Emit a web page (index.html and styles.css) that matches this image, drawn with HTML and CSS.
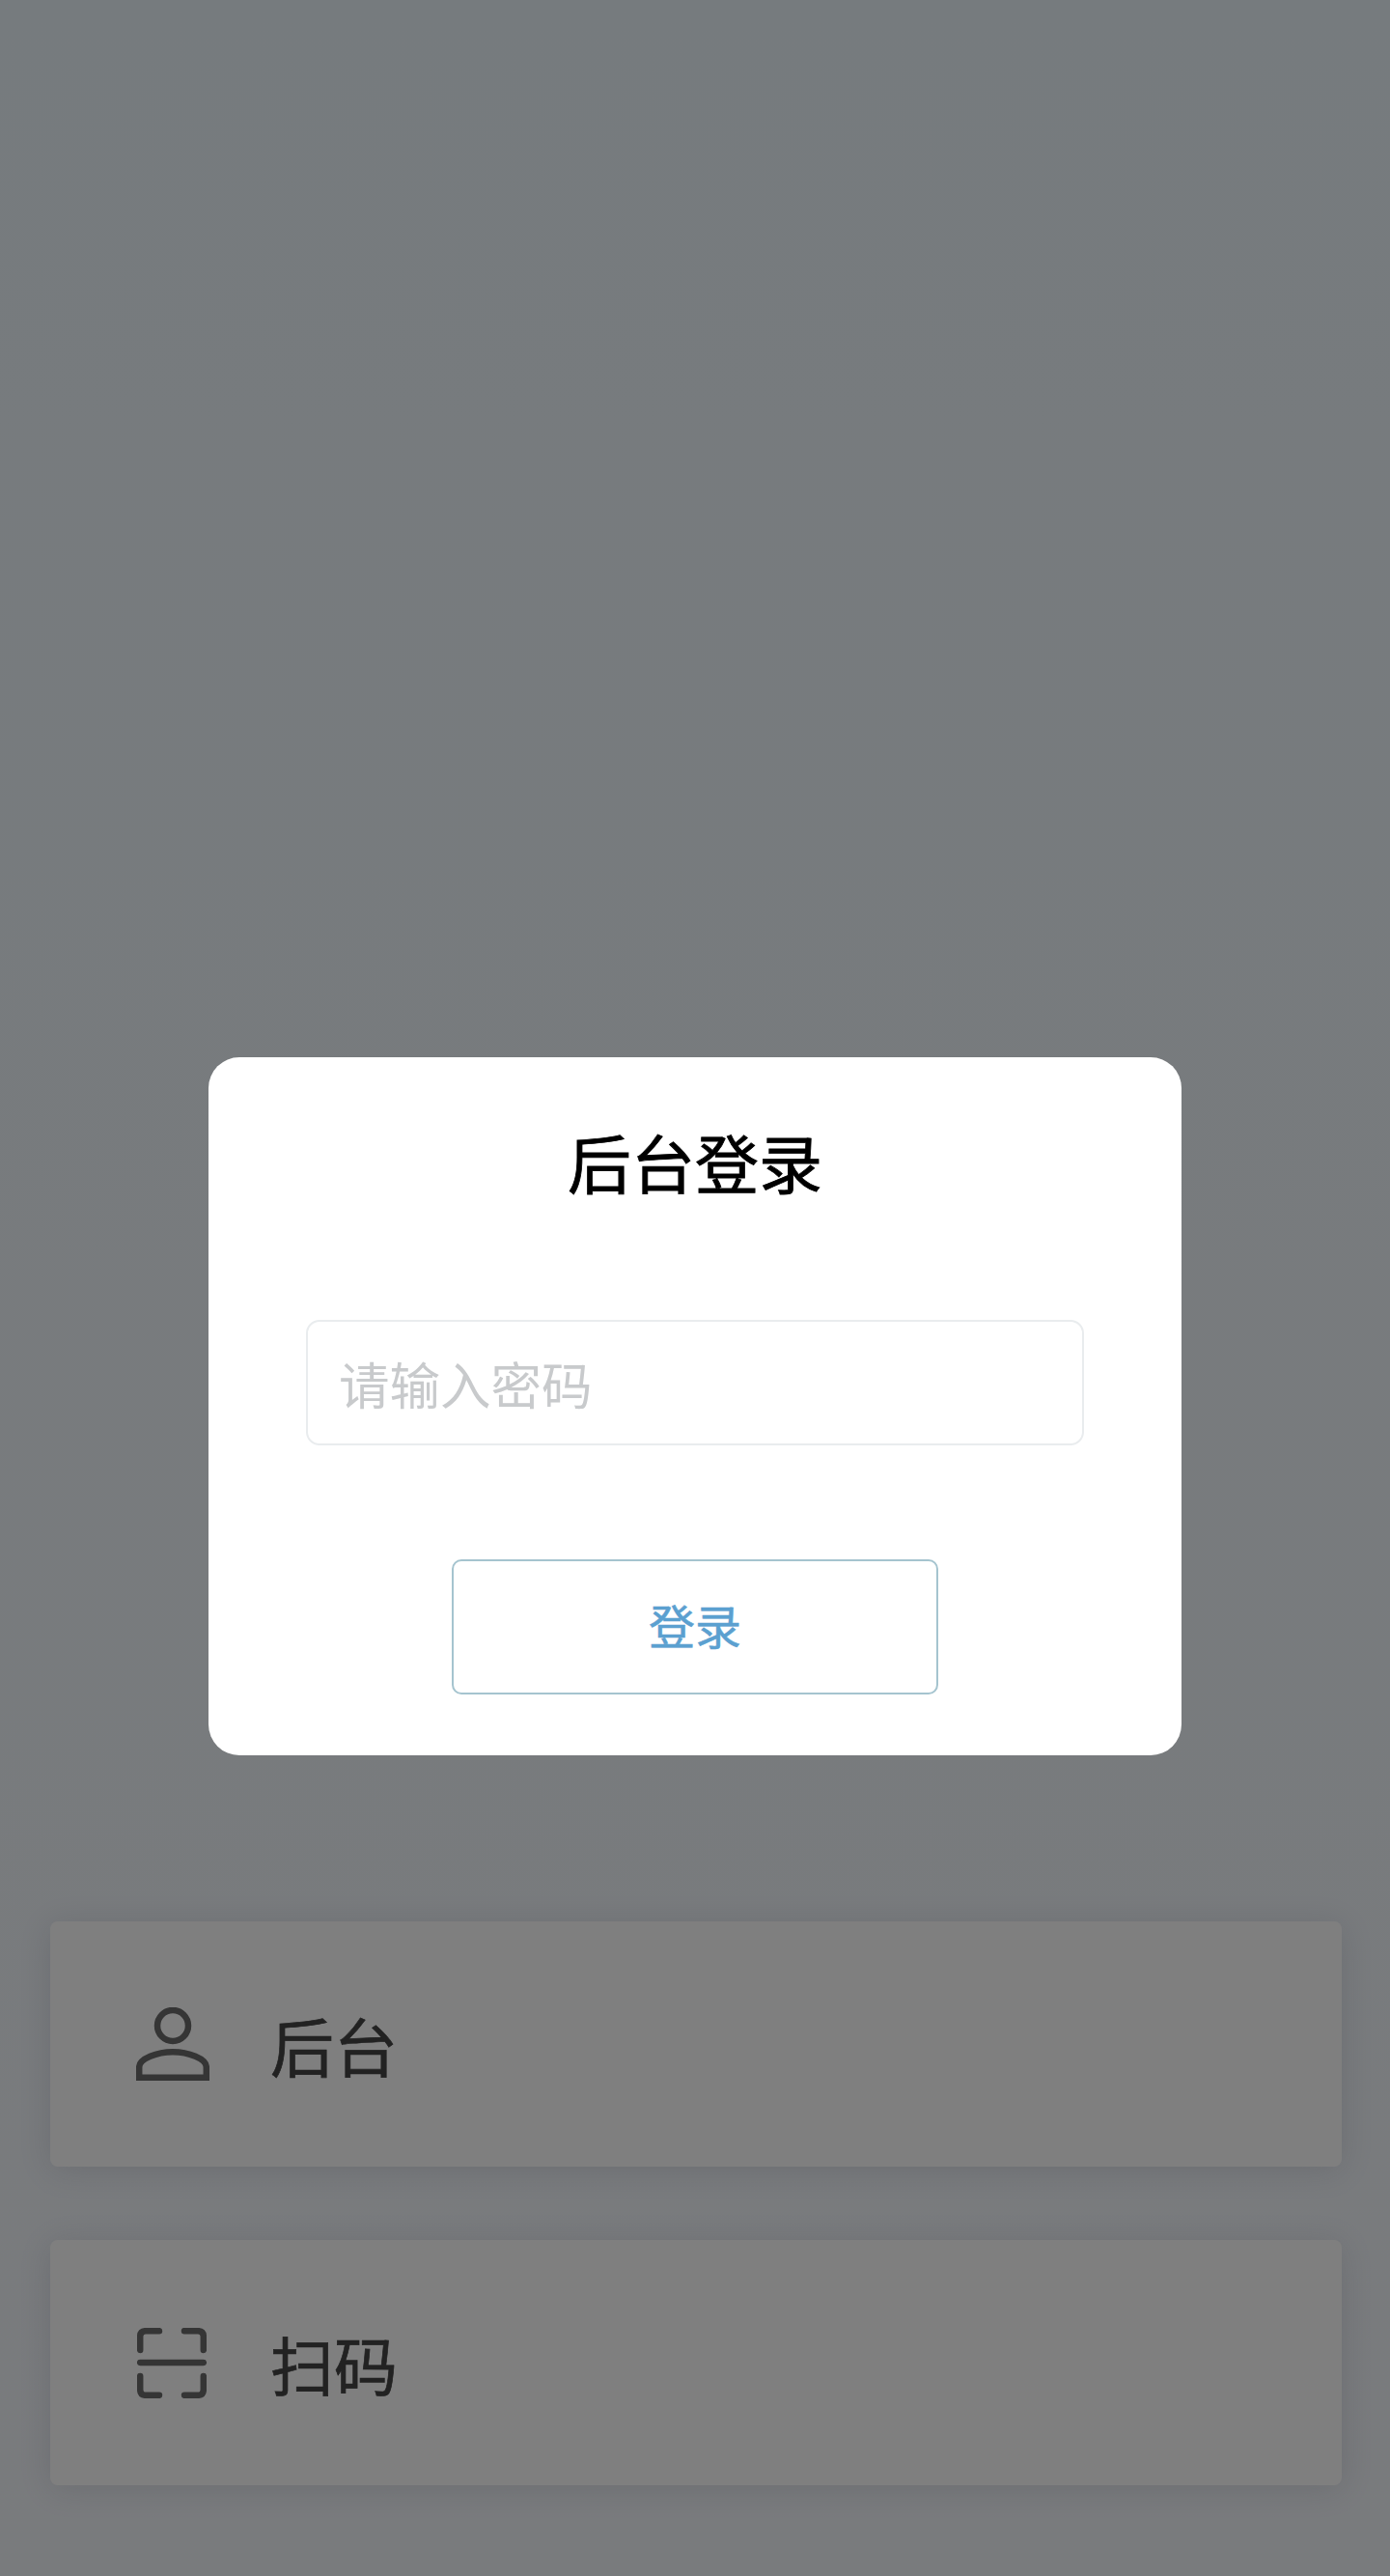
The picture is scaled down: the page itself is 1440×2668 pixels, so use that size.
FILE: index.html
```html
<!DOCTYPE html>
<html lang="zh-CN">
<head>
<meta charset="utf-8">
<title>后台登录</title>
<link rel="stylesheet" href="styles.css">
</head>
<body>
<main class="page">
  <a class="entry">
    <span class="entry-icon">
      <svg class="icon-user" viewBox="0 0 76 76" fill="none" stroke="#6a6a6a" stroke-width="6.5">
        <circle cx="38" cy="19" r="16"/>
        <path d="M3.2 72.8V62C3.2 53 22 46.2 38 46.2S72.8 53 72.8 62V72.8Z"/>
      </svg>
    </span>
    <span class="entry-label">后台</span>
  </a>
  <a class="entry">
    <span class="entry-icon">
      <svg class="icon-scan" viewBox="0 0 72 73" fill="none" stroke="#6a6a6a" stroke-width="6.5" stroke-linecap="round" stroke-linejoin="round">
        <path d="M23 3.2H9Q3.2 3.2 3.2 9V23"/>
        <path d="M49 3.2H63Q68.8 3.2 68.8 9V23"/>
        <path d="M3.2 36H68.8"/>
        <path d="M3.2 50V64Q3.2 69.8 9 69.8H23"/>
        <path d="M49 69.8H63Q68.8 69.8 68.8 64V50"/>
      </svg>
    </span>
    <span class="entry-label">扫码</span>
  </a>
</main>
<div class="mask">
  <form class="dialog">
    <h1 class="dialog-title">后台登录</h1>
    <input class="dialog-input" type="password" placeholder="请输入密码">
    <button class="dialog-button" type="button">登录</button>
  </form>
</div>
</body>
</html>
```

FILE: styles.css
```css
* {
  box-sizing: border-box;
}

html,
body {
  margin: 0;
  height: 2668px;
}

body {
  position: relative;
  overflow: hidden;
  background: linear-gradient(#edf7fc, #f3f6fb);
  font-family: "Noto Sans CJK SC", "Noto Sans", sans-serif;
}

.page {
  display: flex;
  flex-direction: column;
  gap: 76px;
  padding: 1990px 50px 0 52px;
}

.entry {
  display: flex;
  align-items: center;
  gap: 63px;
  height: 254px;
  padding-left: 89px;
  background: #fff;
  border-radius: 8px;
  box-shadow: 0 4px 34px rgba(30, 30, 60, 0.12);
}

.entry-icon {
  display: flex;
  justify-content: flex-start;
  width: 76px;
}

.icon-user {
  width: 76px;
  height: 76px;
}

.icon-scan {
  width: 72px;
  height: 73px;
  margin-left: 1px;
}

.entry-label {
  font-size: 66px;
  font-weight: 400;
  -webkit-text-stroke: 0.7px #444;
  line-height: 90px;
  color: #444;
}

.mask {
  position: absolute;
  inset: 0;
  padding-top: 1095px;
  background: rgba(0, 0, 0, 0.5);
}

.dialog {
  display: flex;
  flex-direction: column;
  align-items: center;
  width: 1008px;
  height: 723px;
  margin: 0 auto;
  padding-top: 62px;
  background: #fff;
  border-radius: 32px;
}

.dialog-title {
  margin: 0;
  font-size: 66px;
  font-weight: 400;
  -webkit-text-stroke: 0.8px #000;
  line-height: 90px;
  color: #000;
}

.dialog-input {
  width: 806px;
  height: 130px;
  margin-top: 120px;
  padding: 0 32px;
  border: 2px solid #e9ecee;
  border-radius: 14px;
  font: inherit;
  font-size: 52.5px;
  outline: none;
}

.dialog-input::placeholder {
  color: #c8cacc;
}

.dialog-button {
  width: 504px;
  height: 140px;
  margin-top: 118px;
  padding: 0 0 7px;
  background: #fff;
  border: 2px solid #a5c4cf;
  border-radius: 10px;
  font: inherit;
  font-size: 48px;
  font-weight: 400;
  -webkit-text-stroke: 0.5px #5ba0d0;
  color: #5ba0d0;
}
```
